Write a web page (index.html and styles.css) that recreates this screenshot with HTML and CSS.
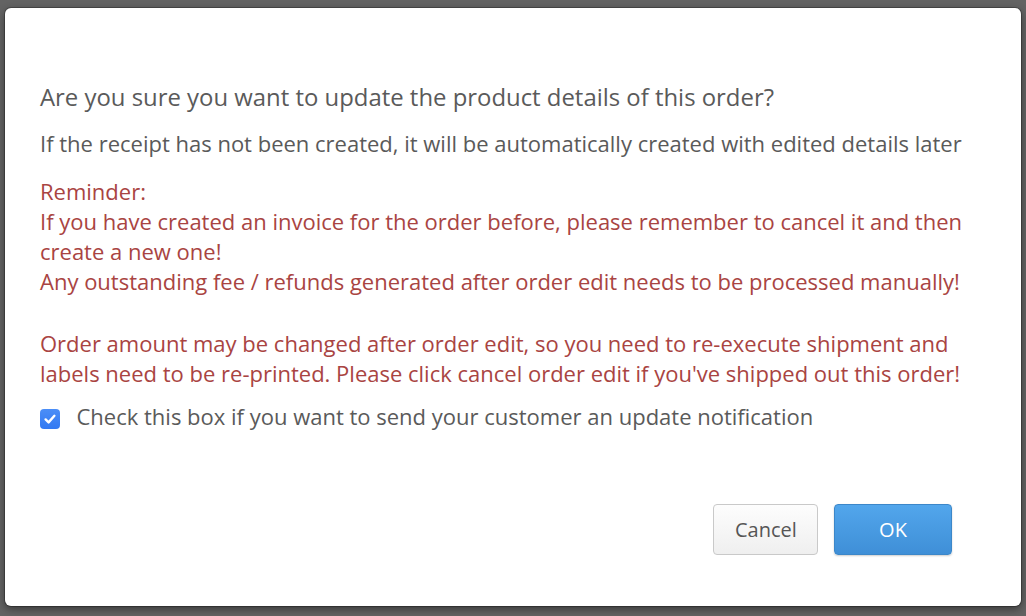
FILE: index.html
```html
<!DOCTYPE html>
<html lang="en">
<head>
<meta charset="utf-8">
<title>Confirm order edit</title>
<link rel="stylesheet" href="styles.css">
</head>
<body>
<div class="backdrop">
  <div class="modal" role="dialog">
    <h2 class="title">Are you sure you want to update the product details of this order?</h2>
    <p class="note">If the receipt has not been created, it will be automatically created with edited details later</p>
    <p class="warn">Reminder:<br>If you have created an invoice for the order before, please remember to cancel it and then create a new one!<br>Any outstanding fee / refunds generated after order edit needs to be processed manually!</p>
    <p class="warn warn-gap">Order amount may be changed after order edit, so you need to re-execute shipment and labels need to be re-printed. Please click cancel order edit if you've shipped out this order!</p>
    <label class="check-row">
      <span class="checkbox"><svg viewBox="0 0 20 20" width="20" height="20"><path d="M5.6 10.4 L8.6 13.4 L14.4 6.8" fill="none" stroke="#fff" stroke-width="2.4" stroke-linecap="round" stroke-linejoin="round"/></svg></span>
      <span class="check-text">Check this box if you want to send your customer an update notification</span>
    </label>
    <div class="footer">
      <button class="btn btn-default">Cancel</button>
      <button class="btn btn-primary">OK</button>
    </div>
  </div>
</div>
</body>
</html>
```
FILE: styles.css
```css
html, body {
  margin: 0;
  padding: 0;
}
body {
  width: 1026px;
  height: 616px;
  overflow: hidden;
  background: #636363;
  font-family: "Open Sans", "Noto Sans", sans-serif;
}
.backdrop {
  padding: 8px 5px 10px 5px;
}
.modal {
  box-sizing: border-box;
  width: 1016px;
  height: 598px;
  background: #fff;
  border-radius: 6px;
  box-shadow: 0 0 0 1px rgba(0,0,0,0.25), 0 3px 9px rgba(0,0,0,0.45);
  padding: 72px 35px 51px 35px;
  display: flex;
  flex-direction: column;
}
.title {
  margin: 0;
  font-size: 23.9px;
  line-height: 34px;
  font-weight: 400;
  color: #5a5a5a;
}
.note {
  margin: 14px 0 0 0;
  font-size: 22px;
  line-height: 30px;
  color: #5a5a5a;
}
.warn {
  margin: 18px 0 0 0;
  font-size: 22px;
  line-height: 30px;
  color: #a94442;
}
.warn-gap {
  margin-top: 32px;
}
.check-row {
  margin-top: 13px;
  display: flex;
  align-items: flex-start;
  gap: 17px;
  font-size: 22px;
  line-height: 30px;
  color: #5a5a5a;
}
.checkbox {
  flex: none;
  width: 20px;
  height: 20px;
  margin-top: 8px;
  margin-left: -0.5px;
  border-radius: 4px;
  background: linear-gradient(#4b8ef7, #3279f2);
  display: flex;
}
.footer {
  margin-top: auto;
  margin-right: 34px;
  display: flex;
  justify-content: flex-end;
  gap: 16px;
}
.btn {
  box-sizing: border-box;
  height: 51px;
  padding: 0 21px;
  border-radius: 4px;
  font-family: "Open Sans", "Noto Sans", sans-serif;
  font-size: 20px;
  line-height: 49px;
}
.btn-default {
  width: 105px;
  color: #555;
  background: linear-gradient(#fdfdfd, #efefef);
  border: 1px solid #c9c9c9;
}
.btn-primary {
  width: 118px;
  color: #fff;
  background: linear-gradient(#52a6ec, #3f8fd7);
  border: 1px solid #3c87c9;
  box-shadow: 0 1px 2px rgba(0,0,0,0.2);
}
```
